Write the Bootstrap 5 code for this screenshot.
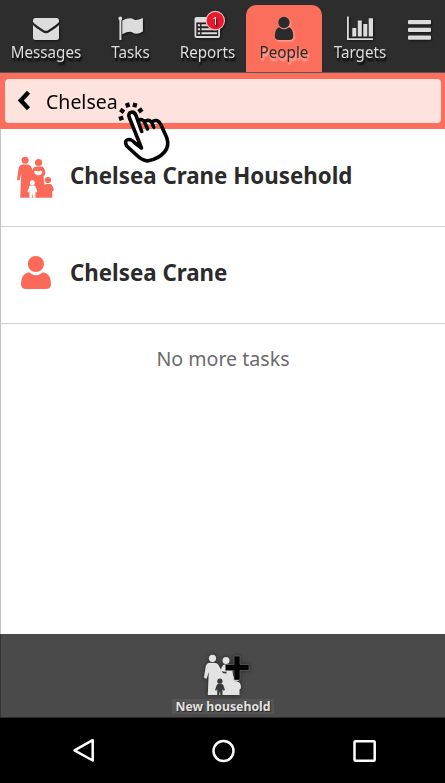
<!DOCTYPE html>
<html lang="en">
<head>
<meta charset="utf-8">
<meta name="viewport" content="width=device-width, initial-scale=1">
<title>People</title>
<link href="https://cdn.jsdelivr.net/npm/bootstrap@5.3.0/dist/css/bootstrap.min.css" rel="stylesheet">
<style>
  body { font-family: "Noto Sans", sans-serif; background: #fff; color: #2b2b2b; overflow: hidden; }
  svg { display: block; flex: none; }
  .app { height: 783px; }
  .tabs { height: 73px; background: #2d2d2d; border-bottom: 1px solid #555; color: #dcdcdc; display: grid; grid-template-columns: 92px 77px 77px 76px 76px 47px; }
  .tab { padding-top: 14px; font-size: 15.2px; line-height: 21px; text-shadow: 1px 2px 2px #000; color: inherit; }
  .tab span { transform: scaleY(1.07); }
  .tab svg { filter: drop-shadow(1px 1px 1px rgba(0,0,0,.6)); }
  .tab.current { background: #fb6e5c; color: #2b2b2b; margin-top: 5px; padding-top: 9px; border-radius: 10px 10px 0 0; text-shadow: 1px 2px 2px #ffc0b5; }
  .tab.current svg { filter: drop-shadow(1px 1px 1px #ffb3a6); }
  .search { height: 56px; background: #fb6e5c; padding: 6px 4px 6px 5px; }
  .field { background: #fee2dd; border-radius: 4px; color: #000; font-size: 19.5px; padding-left: 12px; }
  .field span { transform: scaleY(1.05); padding-top: 1px; }
  .results { border-left: 1px solid #c4c4c4; }
  .result { height: 97.5px; border-bottom: 1px solid #d0d0d0; padding: 0 0 4px 14px; color: #2b2b2b; font-size: 22.3px; }
  .empty { color: #6b6b6b; font-size: 19.6px; line-height: 28px; padding-top: 21px; }
  .actions { height: 84px; background: #4a4a4a; border-left: 1px solid #333; border-bottom: 1px solid #2a2a2a; padding-top: 16px; }
  .action-label { background: #555; color: #e2e2e2; font-size: 12.3px; line-height: 15px; height: 15px; padding: 0 3px; text-shadow: 1px 1px 1px #222; }
  .actions svg { filter: drop-shadow(0 0 2px rgba(0,0,0,.55)); }
  .system { height: 65px; background: #000; }
  .pointer { position: absolute; left: 112px; top: 94px; z-index: 3; pointer-events: none; }
</style>
<script src="https://cdn.jsdelivr.net/npm/bootstrap@5.3.0/dist/js/bootstrap.bundle.min.js"></script>
</head>
<body>
<div class="app d-flex flex-column position-relative">
  <nav class="tabs">
    <a class="tab d-flex flex-column align-items-center text-decoration-none" href="#">
      <svg width="32" height="28" viewBox="30 14 32 28" fill="#dcdcdc"><path d="M33 22V20.500Q33 18 35.500 18H56.500Q59 18 59 20.500V22Q57 24.500 48.500 30Q46 31.700 43.500 30Q35 24.500 33 22ZM33 25Q35 27.300 42.500 32Q46 34.500 49.500 32Q57 27.300 59 25V37.500Q59 40 56.500 40H35.500Q33 40 33 37.500Z"/></svg>
      <span>Messages</span>
    </a>
    <a class="tab d-flex flex-column align-items-center text-decoration-none" href="#">
      <svg width="32" height="28" viewBox="115 14 32 28" fill="#dcdcdc"><circle cx="120.300" cy="18.500" r="1.900"/><path d="M119.400 19H121.400V40H119.400ZM122.300 20.500Q130 16.500 134 19.500Q136 21.200 142.900 18V31.500Q136.500 35.500 132.500 32.400Q129 30.700 122.300 34.300Z"/></svg>
      <span>Tasks</span>
    </a>
    <a class="tab d-flex flex-column align-items-center text-decoration-none" href="#">
      <svg width="44" height="28" viewBox="186 14 44 28" overflow="visible"><path fill="#dcdcdc" fill-rule="evenodd" d="M196.500 17H218Q220 17 220 19V36Q220 38 218 38H196.500Q194.500 38 194.500 36V19Q194.500 17 196.500 17ZM196.300 22.500V36H218.200V22.500Z"/><path fill="#dcdcdc" d="M197.800 24.300h2.300v2h-2.300zM201.500 24.300h15.500v2h-15.500zM197.800 28.300h2.300v2h-2.300zM201.500 28.300h15.500v2h-15.500zM197.800 32.300h2.300v2h-2.300zM201.500 32.300h15.500v2h-15.500z"/><circle cx="215.300" cy="20.600" r="9.200" fill="#e8192c" stroke="#e5b9bb" stroke-width="1.200"/><text x="215.200" y="24.500" text-anchor="middle" font-size="10.500" fill="#fff">1</text></svg>
      <span>Reports</span>
    </a>
    <a class="tab current d-flex flex-column align-items-center text-decoration-none" href="#">
      <svg width="32" height="28" viewBox="268 14 32 28" fill="#2b2b2b"><circle cx="284" cy="22.500" r="5.700"/><path d="M279.300 27.300Q284 31.300 288.700 27.300Q293.300 28.500 293.300 36.200Q293.300 40 289.500 40H278.700Q274.900 40 274.900 36.200Q274.900 28.500 279.300 27.300Z"/></svg>
      <span>People</span>
    </a>
    <a class="tab d-flex flex-column align-items-center text-decoration-none" href="#">
      <svg width="32" height="28" viewBox="344 14 32 28" fill="#dcdcdc"><path d="M347 16.500h1.800V38.300H373V40H347zM352.300 28h4v8.500h-4zM357.800 20.500h4v16h-4zM363.300 24h4v12.500h-4zM368.700 18.200h4.300v18.300h-4.300z"/></svg>
      <span>Targets</span>
    </a>
    <a class="tab d-flex flex-column align-items-center" href="#" aria-label="Menu">
      <svg width="32" height="28" viewBox="406 14 32 28" fill="#dcdcdc"><rect x="408" y="20" width="23" height="4.200" rx="1"/><rect x="408" y="27.800" width="23" height="4.200" rx="1"/><rect x="408" y="35.500" width="23" height="4.200" rx="1"/></svg>
    </a>
  </nav>
  <div class="search">
    <div class="field h-100 d-flex align-items-center">
      <svg width="29" height="24" viewBox="17.5 89 29 24"><path d="M29 92.200L21.300 100.500L29 108.800" fill="none" stroke="#000" stroke-width="4.400"/></svg>
      <span>Chelsea</span>
    </div>
  </div>
  <svg class="pointer" width="60" height="71" viewBox="112 94 60 71"><path d="M125.600 137.500L145 160.500L134 160L127 152ZM129.500 113.500Q134 110.500 136.500 118L138 121.500Q141 118 145.500 122Q149 119.500 152.500 123Q157.500 119 161 125L166.500 136Q170 147 164 154L147.500 161.500Q141 160.500 136 155.500L127 149Q122.500 143 125.500 140Q129 137.500 134 143L141 148Z" fill="#fff"/><path d="M131 114L137 128.500H160L158 123Q154 118 150 119.500Q145 116 138 120L135 114Z" fill="#fff"/><path d="M140 122L142.500 129H145V124ZM147 124L149 129H152.500V125ZM155 124L156.500 129H161L159 123Z" fill="#fb6e5c"/><g fill="none" stroke="#050505" stroke-width="3.600" stroke-linecap="round" stroke-linejoin="round"><path d="M141.500 148L129.300 117.500Q127.800 113.300 131.200 112.300Q134.500 111.500 136.200 116L141.700 131.500M137.800 120.500Q142.500 117.800 145 123L147.500 129M145 121.500Q150 118.300 152.500 124L154 127.500M152.500 121.500Q158 118.500 160.800 124.500L166.700 137.500Q169.600 146 164.500 152Q158.500 159 147.500 161Q141.500 160 136.500 155L126.700 146Q124.200 141 127.200 139.800Q131 138.300 135.500 143.500L141.500 148"/></g><path d="M119 119L123.300 117.500M120.300 109.500L124 112.200M126.900 103L128.400 107.300M135.400 103L134.300 107.300M142.300 109L138.500 111.700" stroke="#080808" stroke-width="4.200"/></svg>
  <main class="results flex-grow-1">
    <a href="#" class="result d-flex align-items-center text-decoration-none fw-bold">
      <svg width="55" height="48" viewBox="15 152 55 48" fill="#fb6959"><circle cx="25.100" cy="161.200" r="3.500"/><circle cx="38.600" cy="163.500" r="3.600"/><path d="M18.700 169Q19.500 165.500 23 165.500H27Q30.500 165.500 31.800 169L32.500 171Q33.500 167.600 36.500 167.600H41Q44 167.600 44.800 171L45.300 174.500Q45 176.500 43.500 177.300L44.500 186Q45.500 185 47 185H50Q52.500 185 53.700 190.500Q53.500 192 52.300 192.300V198.800H20.200L21.300 174L19.700 180.700Q18.500 182 17 180.700Z"/><circle cx="48" cy="181" r="3.100"/><path fill="#fff" d="M34 172.700Q35 170.800 38 172.500Q41.500 170.800 42.200 173Q41.800 176.500 38 176.200Q34.500 175.300 34 172.700ZM29.500 187Q30.500 186.300 32.300 186.300Q34.500 186.300 35.500 187.200L37.300 192.800L36.300 193.500L35.500 192V198.800H33L32.500 194L32 198.800H29.400V192L28.500 193.500L27.500 192.800Z"/><circle cx="32.300" cy="183.700" r="2.500" fill="#fff"/></svg>
      <span>Chelsea Crane Household</span>
    </a>
    <a href="#" class="result d-flex align-items-center text-decoration-none fw-bold">
      <svg width="55" height="44" viewBox="15 251 55 44" fill="#fb6959"><circle cx="35.900" cy="264" r="8.100"/><path d="M29 272.200Q36 278.200 43 272.200Q51 273.500 51 284Q51 289 46 289H26Q21 289 21 284Q21 273.500 29 272.200Z"/></svg>
      <span>Chelsea Crane</span>
    </a>
    <div class="empty text-center">No more tasks</div>
  </main>
  <div class="actions d-flex flex-column align-items-center">
    <svg width="56" height="49" viewBox="195 650 56 49" fill="#e3e3e3"><circle cx="212.500" cy="658.300" r="3.600"/><circle cx="226" cy="660.500" r="3.500"/><path d="M205.700 666.500Q206.500 662.700 210 662.700H214Q217.500 662.700 219 666L221 669.500Q222 665 224.500 664.500H229Q232 665 233 675L233.500 680.500Q235 682 238 682Q240.500 682 241 687Q241 689 239.500 689.500V695H207.800L208.700 672L206.800 678.500Q204.500 679 204 677Z"/><circle cx="236" cy="678.500" r="3.200"/><path fill="#383838" d="M221.500 671Q223.500 672.300 226.500 671.500V673.500Q222.500 674 221.500 671ZM217 684.500Q219.500 683 223 684.500L225 690L223.600 690.700L222.500 689V695H220.500L219.900 691L219.200 695H217.200V689L216.200 690.700L215 690Z"/><circle cx="219.900" cy="681.200" r="2.600" fill="#383838"/><path fill="#050505" stroke="#777" stroke-width=".6" d="M234 656.500Q234 656 234.500 656H239.500Q240 656 240 656.500V664.500H248Q249 664.500 249 665.500V669.500Q249 670.500 248 670.500H240V679Q240 680 239 680H235Q234 680 234 679V670.500H225.500V664.500H234Z"/></svg>
    <span class="action-label fw-bold">New household</span>
  </div>
  <div class="system d-flex justify-content-center">
    <svg width="395" height="65" viewBox="25 718 395 65" fill="none" stroke="#fff" stroke-width="2.500" stroke-linejoin="round"><path d="M92.700 740.200V760.500L74.500 750.400Z"/><circle cx="223.500" cy="751" r="10"/><rect x="354.500" y="741.200" width="20.200" height="19.500" rx="1"/></svg>
  </div>
</div>
</body>
</html>
